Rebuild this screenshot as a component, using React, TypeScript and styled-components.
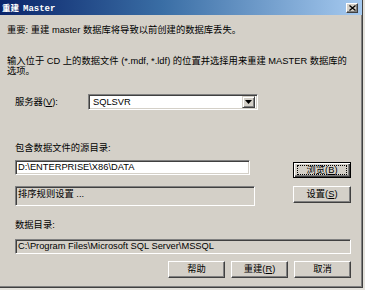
import React from "react";
import styled, { createGlobalStyle, css } from "styled-components";

const GlobalStyle = createGlobalStyle`
  html, body { margin: 0; padding: 0; background: #e4e2dc; }
  body {
    font-family: "Liberation Sans", "Noto Sans CJK SC", sans-serif;
    font-size: 9.3px;
    color: #000;
  }
`;

const Window = styled.div`
  width: 363px;
  height: 288px;
  box-sizing: border-box;
  background: #d4d0c8;
  border-right: 1px solid #404040;
  border-bottom: 1px solid #404040;
  box-shadow: inset -1px -1px #808080;
  display: flex;
  flex-direction: column;
  overflow: hidden;
`;

const TitleBar = styled.div`
  height: 15px;
  flex: none;
  background: linear-gradient(to right, #0a246a 0%, #3a6ea5 45%, #a6caf0 100%);
  display: flex;
  align-items: center;
  justify-content: space-between;
  padding: 0 4px 0 2px;
  color: #fff;
  font-weight: bold;
`;

const TitleText = styled.span`
  font-family: "Noto Sans CJK SC", sans-serif;
  font-size: 8.5px;
  line-height: 12px;
`;

const TitleLatin = styled.span`
  font-family: "Liberation Mono", monospace;
  font-size: 9px;
  margin-left: 4px;
`;

const CloseButton = styled.div`
  width: 12px;
  height: 10px;
  box-sizing: border-box;
  background: #d4d0c8;
  border: 1px solid;
  border-color: #fff #404040 #404040 #fff;
  box-shadow: inset -1px -1px #808080;
  display: flex;
  align-items: center;
  justify-content: center;
`;

const Content = styled.div`
  display: flex;
  flex-direction: column;
  padding: 0 11px 0 15px;
`;

const Note = styled.div`
  margin: 9px 0 0 -8px;
  line-height: 12px;
  white-space: nowrap;
`;

const Paragraph = styled.div`
  margin: 20px 0 0 -8px;
  line-height: 10px;
  width: 346px;
`;

const Row = styled.div<{ $top: number; $h: number }>`
  display: flex;
  align-items: flex-start;
  margin-top: ${(p) => p.$top}px;
  height: ${(p) => p.$h}px;
`;

const InlineLabel = styled.div`
  width: 73px;
  line-height: 16px;
`;

const Label = styled.div<{ $top: number }>`
  margin-top: ${(p) => p.$top}px;
  line-height: 12px;
`;

const sunken = css`
  box-sizing: border-box;
  border: 1px solid;
  border-color: #808080 #fff #fff #808080;
  box-shadow: inset 1px 1px #404040, inset -1px -1px #d4d0c8;
`;

const Select = styled.div`
  ${sunken};
  width: 170px;
  height: 16px;
  background: #fff;
  display: flex;
  align-items: center;
  justify-content: space-between;
  padding: 0 2px 0 4px;
`;

const ArrowButton = styled.div`
  width: 13px;
  height: 12px;
  box-sizing: border-box;
  background: #d4d0c8;
  border: 1px solid;
  border-color: #d4d0c8 #404040 #404040 #d4d0c8;
  box-shadow: inset 1px 1px #fff, inset -1px -1px #808080;
  display: flex;
  align-items: center;
  justify-content: center;
`;

const Field = styled.div<{ $w: number; $h: number; $disabled?: boolean; $top?: boolean }>`
  ${sunken};
  width: ${(p) => p.$w}px;
  height: ${(p) => p.$h}px;
  background: ${(p) => (p.$disabled ? "#d4d0c8" : "#fff")};
  padding: ${(p) => (p.$top ? "2px 2px 0" : "0 2px")};
  display: flex;
  align-items: ${(p) => (p.$top ? "flex-start" : "center")};
  line-height: 11px;
  white-space: nowrap;
`;

const Button = styled.div<{ $w: number; $mt?: number; $default?: boolean }>`
  position: relative;
  box-sizing: border-box;
  width: ${(p) => p.$w}px;
  height: ${(p) => (p.$default ? 16 : 17)}px;
  margin-top: ${(p) => p.$mt ?? 0}px;
  margin-left: auto;
  background: #d4d0c8;
  display: flex;
  align-items: center;
  justify-content: center;
  line-height: 11px;
  ${(p) =>
    p.$default
      ? css`
          border: 1px solid #000;
          box-shadow: inset 1px 1px #fff, inset -1px -1px #404040, inset -2px -2px #808080;
          &::after {
            content: "";
            position: absolute;
            inset: 2px 3px;
            border: 1px dotted #000;
          }
        `
      : css`
          border: 1px solid;
          border-color: #fff #404040 #404040 #fff;
          box-shadow: inset -1px -1px #808080;
        `}
`;

const ButtonBar = styled.div`
  display: flex;
  justify-content: flex-end;
  gap: 6px;
  margin-top: 7px;
`;

const BarButton = styled(Button)`
  margin-left: 0;
`;

const Key = styled.span`
  text-decoration: underline;
`;

export default function App() {
  return (
    <>
      <GlobalStyle />
      <Window>
        <TitleBar>
          <TitleText>
            重建<TitleLatin>Master</TitleLatin>
          </TitleText>
          <CloseButton>
            <svg width="7" height="6" viewBox="0 0 7 6">
              <path d="M0.5 0.5 L6.5 5.5 M6.5 0.5 L0.5 5.5" stroke="#000" strokeWidth="1.3" />
            </svg>
          </CloseButton>
        </TitleBar>
        <Content>
          <Note>重要: 重建 master 数据库将导致以前创建的数据库丢失。</Note>
          <Paragraph>
            输入位于 CD 上的数据文件 (*.mdf, *.ldf) 的位置并选择用来重建 MASTER 数据库的选项。
          </Paragraph>
          <Row $top={18} $h={16}>
            <InlineLabel>
              服务器(<Key>V</Key>):
            </InlineLabel>
            <Select>
              <span>SQLSVR</span>
              <ArrowButton>
                <svg width="7" height="4" viewBox="0 0 7 4">
                  <path d="M0 0 H7 L3.5 4 Z" fill="#000" />
                </svg>
              </ArrowButton>
            </Select>
          </Row>
          <Label $top={32}>包含数据文件的源目录:</Label>
          <Row $top={6} $h={17}>
            <Field $w={235} $h={15}>D:\ENTERPRISE\X86\DATA</Field>
            <Button $w={58} $mt={2} $default>
              浏览(<Key>B</Key>)
            </Button>
          </Row>
          <Row $top={9} $h={20}>
            <Field $w={240} $h={20} $disabled $top>
              排序规则设置 ...
            </Field>
            <Button $w={58}>
              设置(<Key>S</Key>)
            </Button>
          </Row>
          <Label $top={13}>数据目录:</Label>
          <Row $top={8} $h={15}>
            <Field $w={338} $h={15} $disabled>
              C:\Program Files\Microsoft SQL Server\MSSQL
            </Field>
          </Row>
          <ButtonBar>
            <BarButton $w={57}>帮助</BarButton>
            <BarButton $w={57}>
              重建(<Key>R</Key>)
            </BarButton>
            <BarButton $w={57}>取消</BarButton>
          </ButtonBar>
        </Content>
      </Window>
    </>
  );
}
